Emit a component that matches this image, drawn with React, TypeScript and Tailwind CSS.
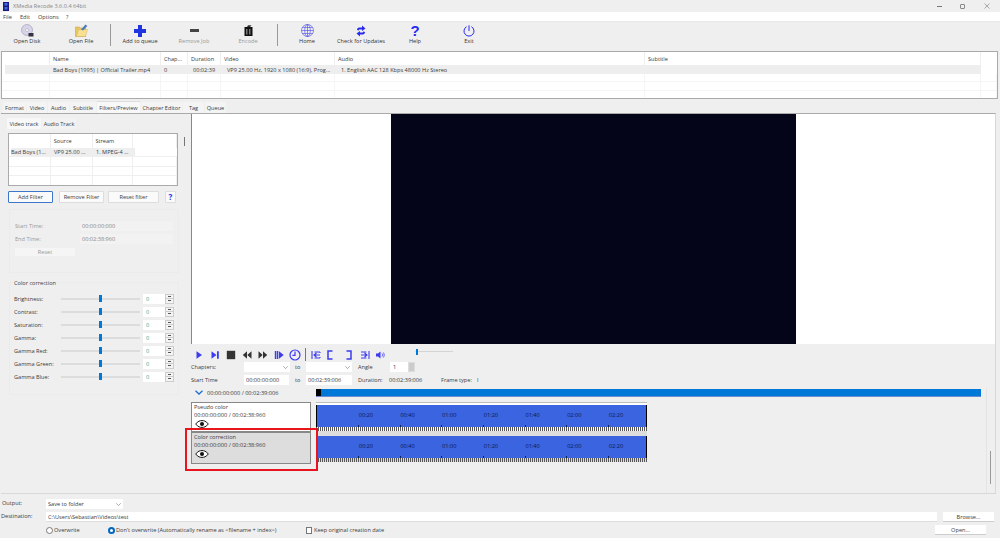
import React from "react";

const Btn = ({ label, disabled, icon }: { label: string; disabled?: boolean; icon: React.ReactNode }) => (
  <div className="w-[54px] h-full flex flex-col items-center">
    <div className="h-[13px] mt-[2px] flex items-center justify-center">{icon}</div>
    <div className={`whitespace-nowrap leading-[9px] ${disabled ? "text-[#999]" : "text-[#333]"}`}>{label}</div>
  </div>
);

const Sep = () => <div className="w-[1px] h-[22px] mt-[2px] mx-[2px] bg-[#999]" />;

const I = ({ w = 10, h = 10, vb = "0 0 10 10", children }: { w?: number; h?: number; vb?: string; children: React.ReactNode }) => (
  <svg width={w} height={h} viewBox={vb}>{children}</svg>
);

const B = "#3c3cf0";

const Eye = () => (
  <svg width="14" height="8" viewBox="0 0 14 8" className="block">
    <path d="M0.7 4C3 1 5 .6 7 .6S11 1 13.3 4C11 7 9 7.4 7 7.4S3 7 .7 4Z" fill="#fff" stroke="#111" strokeWidth="1" />
    <circle cx="7" cy="4" r="2" fill="#111" />
  </svg>
);

const Spin = ({ w = 31 }: { w?: number }) => (
  <div className="flex h-[10px] bg-white" style={{ width: w }}>
    <div className="flex-1 pl-[3px] leading-[10px] text-[#4a8]">0</div>
    <div className="w-[9px] bg-[#ccc] flex flex-col gap-[1px] p-[1px]">
      <div className="flex-1 bg-[#f4f4f4] flex items-center justify-center"><div className="w-[3px] h-[1px] bg-[#555]" /></div>
      <div className="flex-1 bg-[#f4f4f4] flex items-center justify-center"><div className="w-[3px] h-[1px] bg-[#555]" /></div>
    </div>
  </div>
);

const SliderRow = ({ label }: { label: string }) => (
  <div className="flex items-center h-[13px]">
    <div className="w-[47px] text-[#3a3a3a] whitespace-nowrap">{label}</div>
    <div className="w-[79px] flex items-center h-[7px]">
      <div className="flex-1 h-[2px] bg-[#dcdcdc]" />
      <div className="w-[3px] h-[7px] bg-[#0078d7]" />
      <div className="flex-1 h-[2px] bg-[#dcdcdc]" />
    </div>
    <div className="ml-[3px]"><Spin /></div>
  </div>
);

const Tab = ({ label, w, active }: { label: string; w: number; active?: boolean }) => (
  <div
    className={`flex items-center justify-center whitespace-nowrap ${active ? "bg-[#f8f8f8] h-[12px] -mt-[1px] border-t border-[#ddd]" : "bg-[#f4f4f4] h-[11px]"} text-[#3a3a3a]`}
    style={{ width: w }}
  >
    {label}
  </div>
);

const Input = ({ w, children, muted }: { w: number; children?: React.ReactNode; muted?: boolean }) => (
  <div className={`h-[10px] leading-[10px] pl-[2px] whitespace-nowrap ${muted ? "bg-[#f2f2f2] text-[#888]" : "bg-white text-[#3a3a3a]"}`} style={{ width: w }}>
    {children}
  </div>
);

const Select = ({ w, label }: { w: number; label?: string }) => (
  <div className="h-[10px] bg-white flex items-center justify-between px-[2px]" style={{ width: w }}>
    <span className="text-[#3a3a3a] whitespace-nowrap">{label}</span>
    <svg width="5" height="3" viewBox="0 0 5 3"><path d="M.3.3 2.5 2.6 4.7.3" fill="none" stroke="#777" strokeWidth=".6" /></svg>
  </div>
);

const times = ["00:20", "00:40", "01:00", "01:20", "01:40", "02:00", "02:20"];

const ruler =
  "h-[4px] bg-[repeating-linear-gradient(90deg,#555_0,#555_1px,transparent_1px,transparent_2px)]";

const Timeline = ({ top }: { top: boolean }) => (
  <div className={`w-[331px] flex flex-col ${top ? "bg-white h-[29px] border-t border-[#bbb]" : "bg-[#ddd] h-[31px] pt-[5px]"}`}>
    <div className={`flex border-x-[1px] border-black h-[22px] ${top ? "mt-[2px]" : ""}`}>
      <div className="flex-1 min-w-0 overflow-hidden bg-[#3a64e0] flex flex-col">
        <div className="flex pl-[28px] pt-[6px] h-[20px] text-[#0e1a4c]">
          {times.map((t) => (
            <div key={t} className="w-[41.7px] shrink-0 text-center leading-[8px]">{t}</div>
          ))}
        </div>
        <div className="flex pl-[41px] h-[2px]">
          {times.map((t) => (
            <div key={t} className="w-[41.7px] shrink-0"><div className="w-[1px] h-[2px] bg-[#14225a]" /></div>
          ))}
        </div>
      </div>
    </div>
    <div className={ruler} />
  </div>
);

const TrackCard = ({ title, active, h }: { title: string; active?: boolean; h: number }) => (
  <div className={`w-[120px] border border-[#888] px-[2px] pt-[1px] ${active ? "bg-[#ddd]" : "bg-white"}`} style={{ height: h }}>
    <div className="leading-[7px] text-[#3a3a3a] whitespace-nowrap">{title}</div>
    <div className="leading-[8px] text-[#3a3a3a] whitespace-nowrap">00:00:00:000 / 00:02:38:960</div>
    <div className="mt-[1px] ml-[1px]"><Eye /></div>
  </div>
);

const cols = [48, 111, 27, 33, 114, 310, 336, 16];

const TopTable = () => (
  <div className="mx-[1px] w-[997px] h-[48px] border border-[#aaa] bg-white flex flex-col text-[#3a3a3a]">
    <div className="flex h-[13px] items-center">
      {["", "Name", "Chap...", "Duration", "Video", "Audio", "Subtitle"].map((t, i) => (
        <div key={i} className="pl-[3px] border-r border-[#eee] h-full flex items-center whitespace-nowrap" style={{ width: cols[i] }}>{t}</div>
      ))}
    </div>
    <div className="flex h-[9px] ml-[3px] mr-[16px] bg-[#eeeeee] items-center whitespace-nowrap">
      <div className="w-[48px]" />
      <div className="w-[108px] overflow-hidden">Bad Boys (1995)  |  Official Trailer.mp4</div>
      <div className="w-[30px] pl-[3px]">0</div>
      <div className="w-[33px] pl-[2px]">00:02:39</div>
      <div className="w-[114px] pl-[3px]">VP9 25.00 Hz, 1920 x 1080 (16:9), Prog...</div>
      <div className="pl-[3px]">1. English AAC  128 Kbps 48000 Hz Stereo</div>
    </div>
    {[0, 1, 2].map((r) => (
      <div key={r} className="flex flex-1 border-b border-[#f5f5f5] last:border-b-0">
        {cols.map((c, i) => (
          <div key={i} className="border-r border-[#f5f5f5]" style={{ width: c }} />
        ))}
      </div>
    ))}
  </div>
);

const subCols = [42, 42, 41, 44];

const Transport = () => (
  <div className="flex items-center h-[15px] mt-[3px]">
    <div className="w-[16px] flex justify-center"><I><path d="M2.5 1.2 8 5 2.5 8.8Z" fill={B} /></I></div>
    <div className="w-[16px] flex justify-center"><I><path d="M1.5 1.2 6.500 5 1.500 8.8Z M7 1.2h1.800v7.600H7Z" fill={B} /></I></div>
    <div className="w-[16px] flex justify-center"><I><rect x=".8" y=".8" width="8.400" height="8.400" fill="#333" /></I></div>
    <div className="w-[16px] flex justify-center"><I><path d="M5 1.200V8.800L.8 5Z M9.500 1.200V8.800L5.300 5Z" fill="#333" /></I></div>
    <div className="w-[16px] flex justify-center"><I><path d="M.5 1.200V8.800L4.700 5Z M5 1.200V8.800L9.200 5Z" fill="#333" /></I></div>
    <div className="w-[16px] flex justify-center"><I><path d="M.8 1h1.600v8H.8Z M3 1h1.300v8H3Z M5 1.200 9.700 5 5 8.800Z" fill={B} /></I></div>
    <div className="w-[16px] flex justify-center"><I w={12} h={12} vb="0 0 12 12"><circle cx="6" cy="6" r="5" fill="none" stroke={B} strokeWidth="1.2" /><path d="M6 2.500V6.300H3.400" fill="none" stroke={B} strokeWidth="1.2" /></I></div>
    <div className="w-[1px] h-[13px] bg-[#777] ml-[2px] mr-[3px]" />
    <div className="w-[14px] flex justify-center"><I><path d="M1 1v8M9 2H3.500M9 8H3.500M3 5h6M5.500 3 3 5 5.500 7M9 2v1M9 7v1" fill="none" stroke={B} strokeWidth="1.1" /></I></div>
    <div className="w-[14px] flex justify-center"><I><path d="M7.500 1H3v8h4.500" fill="none" stroke={B} strokeWidth="1.500" /></I></div>
    <div className="w-[5px]" />
    <div className="w-[14px] flex justify-center"><I><path d="M2.500 1H7v8H2.500" fill="none" stroke={B} strokeWidth="1.500" /></I></div>
    <div className="w-[2px]" />
    <div className="w-[14px] flex justify-center"><I><path d="M9 1v8M1 2h5.500M1 8h5.500M1 5h6M4.500 3 7 5 4.500 7" fill="none" stroke={B} strokeWidth="1.100" /></I></div>
    <div className="w-[1px]" />
    <div className="w-[14px] flex justify-center"><I><path d="M1 3.500h2L5.500 1.500v7L3 6.500H1Z" fill={B} /><path d="M7 3.500C7.700 4.300 7.700 5.700 7 6.500M8.300 2.500C9.500 4 9.500 6 8.300 7.500" fill="none" stroke={B} strokeWidth=".8" /></I></div>
    <div className="ml-[28px] w-[38px] h-[7px] -mt-[6px] flex items-center">
      <div className="w-[1px] h-[1px] bg-[#ddd]" />
      <div className="w-[2px] h-[6px] bg-[#0078d7]" />
      <div className="flex-1 h-[1px] bg-[#d4d4d4]" />
    </div>
  </div>
);

export default function App() {
  return (
    <div className="relative w-[1000px] h-[538px] overflow-hidden bg-[#efefef] text-[5.6px] leading-[8px] text-[#3a3a3a] [font-family:'Open_Sans',sans-serif]">
      {/* title bar */}
      <div className="h-[12px] flex items-center">
        <svg width="6" height="9" viewBox="0 0 6 9" className="ml-[3px]"><rect width="6" height="9" fill="#1a1a80" /><rect x="1.500" y="1" width="3" height="2.500" fill="#3c6ce0" /><rect x="1.500" y="5" width="3" height="2.500" fill="#3c6ce0" /></svg>
        <div className="ml-[4px] text-[#888]">XMedia Recode 3.6.0.4 64bit</div>
        <div className="flex-1" />
        <div className="w-[5px] h-[1px] bg-[#777] mr-[18px]" />
        <div className="w-[5px] h-[5px] border border-[#888] rounded-[1px] mr-[19px]" />
        <svg width="6" height="6" viewBox="0 0 6 6" className="mr-[10px]"><path d="M.5.5 5.500 5.500M5.500.5.5 5.500" stroke="#777" strokeWidth=".6" /></svg>
      </div>
      {/* menu */}
      <div className="h-[10px] bg-white flex items-center pl-[3px] border-b border-[#e8e8e8]">
        <span className="w-[17px]">File</span>
        <span className="w-[18px]">Edit</span>
        <span className="w-[28px]">Options</span>
        <span>?</span>
      </div>
      {/* toolbar */}
      <div className="h-[29px] flex">
        <Btn label="Open Disk" icon={<svg width="13" height="13" viewBox="0 0 13 13"><circle cx="6" cy="6" r="5.500" fill="#d8d4ea" stroke="#9a96b0" strokeWidth=".6" /><circle cx="6" cy="6" r="1.500" fill="#fff" stroke="#888" strokeWidth=".4" /><rect x="7.500" y="9" width="5" height="3.500" fill="#334" /></svg>} />
        <Btn label="Open File" icon={<svg width="13" height="13" viewBox="0 0 13 13"><path d="M.5 12.500V3h4l1 1h5v8.500Z" fill="#e8c860" stroke="#b89a40" strokeWidth=".5" /><path d="M1.500 12.500 3.500 5.500h9l-2 7Z" fill="#f8e090" stroke="#c8a850" strokeWidth=".4" /><path d="M6 5.500 10.500.5l1.800 1.500-4.300 4.500Z" fill="#4a7ac0" /></svg>} />
        <Sep />
        <Btn label="Add to queue" icon={<svg width="12" height="12" viewBox="0 0 12 12"><path d="M4 0h4v4h4v4H8v4H4V8H0V4h4Z" fill="#1f33e0" /></svg>} />
        <Btn label="Remove Job" disabled icon={<svg width="9" height="3" viewBox="0 0 9 3"><rect width="9" height="3" fill="#444" /></svg>} />
        <Btn label="Encode" disabled icon={<svg width="9" height="11" viewBox="0 0 9 11"><rect x=".5" y="2" width="8" height="9" fill="#111" /><rect x="2" y="4" width="1.500" height="5.500" fill="#777" /><rect x="5" y="4" width="1.500" height="5.500" fill="#777" /><path d="M3 2 4 .3h3.500L6 2Z" fill="#333" /></svg>} />
        <Sep />
        <Btn label="Home" icon={<svg width="13" height="13" viewBox="0 0 13 13" fill="none" stroke="#4646e8" strokeWidth=".6"><circle cx="6.500" cy="6.500" r="6" /><ellipse cx="6.500" cy="6.500" rx="2.800" ry="6" /><path d="M6.500.5v12M.5 6.500h12M1.300 3.500h10.400M1.300 9.500h10.400" /></svg>} />
        <Btn label="Check for Updates" icon={<svg width="10" height="12" viewBox="0 0 10 12" fill="#2a2af0"><path d="M1 5C1 3 2.500 2.500 4 2.500H6V.5L9.500 3.500 6 6V4.500H4C3 4.500 2.800 5 2.800 5.500Z" /><path d="M9 7C9 9 7.500 9.500 6 9.500H4v2L.5 8.500 4 6v1.500h2C7 7.500 7.200 7 7.200 6.500Z" /></svg>} />
        <Btn label="Help" icon={<span className="text-[15px] leading-[13px] font-bold text-[#2a2af0] [font-family:'Liberation_Sans',sans-serif]">?</span>} />
        <Btn label="Exit" icon={<svg width="12" height="12" viewBox="0 0 12 12" fill="none" stroke="#2a2af0" strokeWidth="1"><path d="M3.600 1.700A5 5 0 1 0 8.400 1.700" /><path d="M6 .3V6" /></svg>} />
      </div>
      <TopTable />
      {/* tabs */}
      <div className="flex mt-[3px] ml-[3px] gap-[1px] h-[11px]">
        <Tab label="Format" w={23} />
        <Tab label="Video" w={20} />
        <Tab label="Audio" w={21} />
        <Tab label="Subtitle" w={26} />
        <Tab label="Filters/Preview" w={43} active />
        <Tab label="Chapter Editor" w={41} />
        <Tab label="Tag" w={21} />
        <Tab label="Queue" w={21} />
      </div>
      {/* main */}
      <div className="ml-[1px] w-[995px] h-[381px] border-t border-r border-b border-[#d8d8d8] border-t-[#aaa] flex">
        {/* left */}
        <div className="w-[190px] flex">
          <div className="w-[178px] pl-[6px] flex flex-col">
            <div className="flex mt-[4px] h-[11px]">
              <div className="w-[34px] bg-[#f8f8f8] flex items-center justify-center">Video track</div>
              <div className="w-[34px] bg-[#f2f2f2] flex items-center justify-center ml-[1px]">Audio Track</div>
            </div>
            <div className="mt-[4px] ml-[1px] w-[170px] h-[53px] border border-[#aaa] bg-white flex flex-col">
              <div className="flex h-[14px] items-center">
                {["", "Source", "Stream", ""].map((t, i) => (
                  <div key={i} className="h-full flex items-center pl-[3px] border-r border-[#eee]" style={{ width: subCols[i] }}>{t}</div>
                ))}
              </div>
              <div className="flex h-[8px] w-[124px] ml-[2px] bg-[#eee] items-center whitespace-nowrap">
                <div className="w-[40px] overflow-hidden">Bad Boys (1...</div>
                <div className="w-[42px] pl-[3px] overflow-hidden">VP9 25.00 ...</div>
                <div className="pl-[3px] overflow-hidden">1. MPEG-4 ...</div>
              </div>
              {[0, 1, 2].map((r) => (
                <div key={r} className="flex flex-1 border-t border-[#efefef]">
                  {subCols.map((c, i) => (
                    <div key={i} className="border-r border-[#efefef]" style={{ width: c }} />
                  ))}
                </div>
              ))}
            </div>
            <div className="flex mt-[5px] ml-[1px] h-[12px]">
              <div className="w-[45px] bg-[#fafafa] border border-[#3d78c8] rounded-[1px] flex items-center justify-center">Add Filter</div>
              <div className="w-[45px] ml-[6px] bg-[#fafafa] border border-[#ddd] rounded-[1px] flex items-center justify-center">Remove Filter</div>
              <div className="w-[51px] ml-[4px] bg-[#fafafa] border border-[#ddd] rounded-[1px] flex items-center justify-center">Reset filter</div>
              <div className="w-[11px] ml-[6px] bg-[#fafafa] border border-[#ddd] rounded-[1px] flex items-center justify-center font-bold text-[#2a2af0] text-[8px]">?</div>
            </div>
            <div className="mt-[6px] ml-[2px] w-[170px] h-[64px] border border-[#ebebeb] pl-[5px] pt-[9px] text-[#999]">
              <div className="flex items-center h-[13px]">
                <div className="w-[65px]">Start Time:</div>
                <Input w={93} muted>00:00:00:000</Input>
              </div>
              <div className="flex items-center h-[13px]">
                <div className="w-[65px]">End Time:</div>
                <Input w={93} muted>00:02:38:960</Input>
              </div>
              <div className="w-[60px] h-[8px] mt-[3px] bg-[#f5f5f5] flex items-center justify-center">Reset</div>
            </div>
            <div className="relative mt-[9px] ml-[2px] w-[170px] h-[113px] border border-[#ebebeb] pl-[4px] pt-[9px]">
              <div className="absolute -top-[4px] left-[3px] px-[1px] bg-[#efefef] whitespace-nowrap">Color correction</div>
              {["Brightness:", "Contrast:", "Saturation:", "Gamma:", "Gamma Red:", "Gamma Green:", "Gamma Blue:"].map((l) => (
                <SliderRow key={l} label={l} />
              ))}
            </div>
          </div>
          <div className="ml-[5px] mt-[23px] w-[1px] h-[9px] bg-[#777]" />
        </div>
        {/* right */}
        <div className="flex-1 flex flex-col">
          <div className="h-[230px] bg-white border-l border-[#888] flex justify-center">
            <div className="w-[405px] h-full bg-[#05051a]" />
          </div>
          <Transport />
          <div className="flex items-center h-[10px] whitespace-nowrap">
            <div className="w-[53px] -mt-[1px]">Chapters:</div>
            <Select w={46} />
            <div className="w-[16px] pl-[5px]">to</div>
            <Select w={46} />
            <div className="w-[38px] pl-[6px] -mt-[1px]">Angle</div>
            <div className="w-[25px] h-[10px] bg-white flex">
              <div className="flex-1 pl-[3px] leading-[10px]">1</div>
              <div className="w-[7px] bg-[#ccc] border border-[#ddd]" />
            </div>
          </div>
          <div className="flex items-center h-[10px] mt-[3px] whitespace-nowrap">
            <div className="w-[53px] -mt-[1px]">Start Time</div>
            <Input w={45}>00:00:00:000</Input>
            <div className="w-[17px] pl-[6px]">to</div>
            <Input w={46}>00:02:39:006</Input>
            <div className="w-[37px] pl-[6px]">Duration:</div>
            <div className="w-[52px]">00:02:39:006</div>
            <div className="w-[36px]">Frame type:</div>
            <div>I</div>
          </div>
          {/* lower */}
          <div className="flex mt-[3px] flex-1">
            <div className="w-[795px]">
              <div className="flex h-[9px] items-center">
                <div className="w-[16px] flex justify-center">
                  <svg width="8" height="5" viewBox="0 0 8 5"><path d="M.5.8 4 4 7.500.8" fill="none" stroke="#1f6fd0" strokeWidth="1.300" /></svg>
                </div>
                <div className="w-[109px] whitespace-nowrap">00:00:00:000 / 00:02:39:006</div>
                <div className="w-[665px] h-[8px] border-b border-[#6a8cd0] bg-[#0078d7]">
                  <div className="w-[5px] h-full bg-black" />
                </div>
              </div>
              <div className="flex mt-[5px]">
                <div className="flex flex-col">
                  <TrackCard title="Pseudo color" h={30} />
                  <TrackCard title="Color correction" active h={32} />
                </div>
                <div className="ml-[5px] flex flex-col">
                  <Timeline top />
                  <Timeline top={false} />
                </div>
              </div>
            </div>
            <div className="w-[9px] border-l border-[#e4e4e4] pl-[3px] pt-[63px]">
              <div className="w-[1px] h-[33px] bg-[#999]" />
            </div>
          </div>
        </div>
      </div>
      {/* bottom */}
      <div className="flex items-center mt-[5px] h-[10px]">
        <div className="w-[46px] pl-[2px] -mt-[3px]">Output:</div>
        <Select w={77} label="Save to folder" />
      </div>
      <div className="flex items-center mt-[3px] h-[10px]">
        <div className="w-[46px] pl-[1px] -mt-[2px]">Destination:</div>
        <div className="w-[891px] h-[10px] bg-white pl-[2px] leading-[10px] border-b border-[#ddd]">C:\Users\Sebastian\Videos\test</div>
        <div className="ml-[6px] w-[51px] h-[10px] bg-white border-b border-[#ccc] text-center leading-[10px]">Browse...</div>
      </div>
      <div className="flex items-center mt-[3px] h-[10px] whitespace-nowrap">
        <div className="ml-[46px] w-[7px] h-[7px] rounded-full border border-[#777] bg-white" />
        <div className="ml-[1px] w-[54px]">Overwrite</div>
        <div className="w-[7px] h-[7px] rounded-full border-2 border-[#0067c0] bg-white" />
        <div className="ml-[1px] w-[190px]">Don't overwrite (Automatically rename as &lt;filename + index&gt;)</div>
        <div className="w-[6px] h-[7px] border border-[#777] bg-white" />
        <div className="ml-[2px] w-[621px]">Keep original creation date</div>
        <div className="w-[51px] h-[10px] bg-white border-b border-[#ccc] text-center leading-[10px]">Open...</div>
      </div>
      {/* highlight annotation */}
      <div className="absolute left-[185px] top-[428px] w-[133px] h-[43px] border-2 border-[#e8141e]" />
    </div>
  );
}
